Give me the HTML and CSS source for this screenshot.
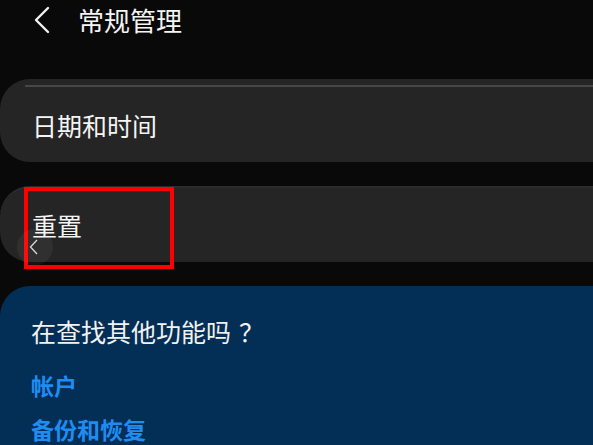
FILE: index.html
```html
<!DOCTYPE html>
<html lang="zh-CN">
<head>
    <meta charset="UTF-8">
    <meta name="viewport" content="width=device-width, initial-scale=1.0">
    <title>常规管理</title>
    <link rel="stylesheet" href="styles.css">
</head>
<body>
    <div class="header">
        <svg class="back-icon" width="16" height="28" viewBox="0 0 16 28">
            <path d="M14 2 L2 14 L14 26" fill="none" stroke="#f2f2f2" stroke-width="2.4" stroke-linecap="round" stroke-linejoin="round"/>
        </svg>
        <h1>常规管理</h1>
    </div>

    <div class="card card-first">
        <div class="card-divider"></div>
        <div class="card-item">日期和时间</div>
    </div>

    <div class="card card-second">
        <div class="card-item">重置</div>
    </div>

    <div class="suggest">
        <div class="suggest-title">在查找其他功能吗<span class="punct">？</span></div>
        <a class="suggest-link" href="#">帐户</a>
        <a class="suggest-link" href="#">备份和恢复</a>
    </div>

    <!-- overlays -->
    <div class="highlight"></div>
    <div class="scroll-handle">
        <svg width="10" height="16" viewBox="0 0 10 16">
            <path d="M8 1 L1.5 8 L8 15" fill="none" stroke="#d8d8d8" stroke-width="1.3"/>
        </svg>
    </div>
</body>
</html>
```

FILE: styles.css
```css
body {
    margin: 0;
    background: #090909;
    color: #f2f2f2;
    font-family: "Noto Sans CJK SC", "Noto Sans", sans-serif;
    height: 445px;
    overflow: hidden;
    position: relative;
}

.header {
    display: flex;
    align-items: center;
    height: 40px;
    padding-left: 34px;
}

.back-icon {
    display: block;
    margin-right: 28px;
}

.header h1 {
    margin: 0;
    font-size: 26px;
    font-weight: 400;
    line-height: 1;
    color: #f4f4f4;
}

.card {
    background: #252525;
    border-radius: 30px 0 0 30px;
    box-sizing: border-box;
}

.card-first {
    margin-top: 39px;
    height: 83px;
    padding-top: 6px;
}

.card-divider {
    height: 2px;
    margin-left: 25px;
    background: #474747;
}

.card-first .card-item {
    height: 75px;
}

.card-second {
    margin-top: 24px;
    height: 76px;
    border-top: 2px solid #2c2c2c;
}

.card-second .card-item {
    height: 74px;
}

.card-item {
    display: flex;
    align-items: center;
    padding-left: 32px;
    font-size: 25px;
    color: #f4f4f4;
}

.suggest {
    margin-top: 24px;
    height: 200px;
    background: #032e55;
    border-radius: 30px 0 0 0;
    padding: 30px 0 0 31px;
    box-sizing: border-box;
}

.suggest-title {
    font-size: 25px;
    line-height: 30px;
    color: #f2f2f2;
    margin-bottom: 27px;
}

.punct {
    padding-left: 8px;
}

.suggest-link {
    display: block;
    font-size: 23px;
    line-height: 24px;
    font-weight: 700;
    color: #1f8cf2;
    text-decoration: none;
    margin-bottom: 20px;
}

.highlight {
    position: absolute;
    left: 24px;
    top: 187px;
    width: 150px;
    height: 82px;
    border: 4px solid #ff0000;
    box-sizing: border-box;
}

.scroll-handle {
    position: absolute;
    left: 17px;
    top: 229px;
    width: 36px;
    height: 36px;
    border-radius: 50%;
    background: rgba(255, 255, 255, 0.05);
    display: flex;
    align-items: center;
    justify-content: center;
    padding-right: 2px;
    box-sizing: border-box;
}

.scroll-handle svg {
    display: block;
}
```
